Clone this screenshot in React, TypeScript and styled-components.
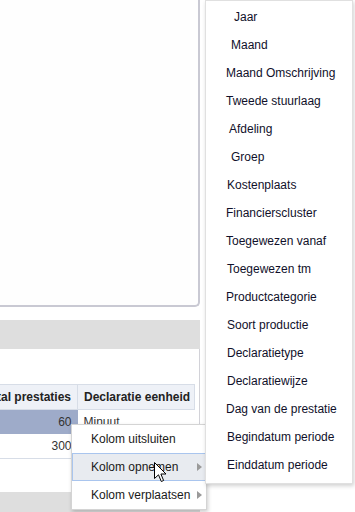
import React from 'react'
import styled, { createGlobalStyle } from 'styled-components'

const GlobalStyle = createGlobalStyle`
    html, body {
        margin: 0;
        padding: 0;
        background: #ffffff;
    }
    body {
        font-family: Arial, "Liberation Sans", sans-serif;
        font-size: 12px;
    }
`

const Page = styled.div`
    position: relative;
    width: 355px;
    height: 512px;
    overflow: hidden;
    background: #ffffff;
`

const LeftColumn = styled.div`
    width: 200px;
    display: flex;
    flex-direction: column;
`

const Card = styled.div`
    height: 305px;
    background: #fefefe;
    border-right: 2px solid #c9c9d3;
    border-bottom: 2px solid #c9c9d3;
    border-bottom-right-radius: 5px;
`

const SectionBar = styled.div<{ $top: number }>`
    margin-top: ${p => p.$top}px;
    height: 29px;
    background: #dedede;
    flex-shrink: 0;
`

const Panel = styled.div`
    height: 108px;
    padding: 35px 5px 0 0;
    border-right: 1px solid #d2d2d8;
    overflow: hidden;
`

const Table = styled.table`
    width: 227px;
    border-collapse: collapse;
    margin-left: -33px;
    table-layout: fixed;
    color: #333;
    font-size: 12px;
`

const HeadCell = styled.th<{ $width: number; $align: string }>`
    width: ${p => p.$width}px;
    height: 25px;
    padding: 0 6px;
    box-sizing: border-box;
    background: #eef1f7;
    border: 1px solid #d7dde7;
    text-align: ${p => p.$align};
    font-weight: bold;
    color: #222;
    white-space: nowrap;
`

const Cell = styled.td<{ $selected?: boolean; $align: string }>`
    height: 24px;
    padding: 0 6px;
    background: ${p => (p.$selected ? '#9eabc9' : '#ffffff')};
    text-align: ${p => p.$align};
    white-space: nowrap;
`

const LastRow = styled.tr`
    border-bottom: 1px solid #d7dde7;
`

const ContextMenu = styled.div`
    position: absolute;
    left: 71px;
    top: 424px;
    width: 134px;
    background: #ffffff;
    border: 1px solid #d4d4d4;
    box-shadow: 1px 2px 4px rgba(0, 0, 0, 0.2);
    z-index: 1;
`

const MenuItem = styled.div<{ $hover?: boolean }>`
    position: relative;
    height: 28px;
    display: flex;
    align-items: center;
    padding-left: 18px;
    box-sizing: border-box;
    color: #1a1a1a;
    font-size: 12px;
    white-space: nowrap;
    background: ${p => (p.$hover ? '#e8ebf0' : 'transparent')};
    border: 1px solid ${p => (p.$hover ? '#a9c5ee' : 'transparent')};
`

const Arrow = styled.span`
    position: absolute;
    right: 3px;
    top: 50%;
    margin-top: -4px;
    width: 0;
    height: 0;
    border-top: 4px solid transparent;
    border-bottom: 4px solid transparent;
    border-left: 5px solid #9a9a9a;
`

const Cursor = styled.svg`
    position: absolute;
    left: 154px;
    top: 462px;
    z-index: 3;
`

const SubMenu = styled.div`
    position: absolute;
    left: 205px;
    top: 0;
    width: 146px;
    padding: 2px 0 4px;
    background: #ffffff;
    border: 1px solid #e0e0e0;
    box-shadow: 1px 2px 4px rgba(0, 0, 0, 0.18);
    z-index: 2;
`

const SubItem = styled.div<{ $indent: number }>`
    height: 28px;
    display: flex;
    align-items: center;
    padding-left: ${p => 20 + p.$indent}px;
    color: #10102a;
    font-size: 12px;
    white-space: nowrap;
`

const columns: [string, number][] = [
    ['Jaar', 8],
    ['Maand', 5],
    ['Maand Omschrijving', 0],
    ['Tweede stuurlaag', 0],
    ['Afdeling', 3],
    ['Groep', 5],
    ['Kostenplaats', 1],
    ['Financierscluster', 0],
    ['Toegewezen vanaf', 0],
    ['Toegewezen tm', 1],
    ['Productcategorie', 0],
    ['Soort productie', 1],
    ['Declaratietype', 1],
    ['Declaratiewijze', 1],
    ['Dag van de prestatie', 0],
    ['Begindatum periode', 1],
    ['Einddatum periode', 1],
]

const App: React.FC = () => {
    return (
        <Page>
            <GlobalStyle />
            <LeftColumn>
                <Card />
                <SectionBar $top={13} />
                <Panel>
                    <Table>
                        <thead>
                            <tr>
                                <HeadCell $width={110} $align="right">Aantal prestaties</HeadCell>
                                <HeadCell $width={117} $align="left">Declaratie eenheid</HeadCell>
                            </tr>
                        </thead>
                        <tbody>
                            <tr>
                                <Cell $selected $align="right">60</Cell>
                                <Cell $align="left">Minuut</Cell>
                            </tr>
                            <LastRow>
                                <Cell $align="right">300</Cell>
                                <Cell $align="left" />
                            </LastRow>
                        </tbody>
                    </Table>
                </Panel>
                <SectionBar $top={0} />
            </LeftColumn>

            <ContextMenu>
                <MenuItem>Kolom uitsluiten</MenuItem>
                <MenuItem $hover>Kolom opnemen<Arrow /></MenuItem>
                <MenuItem>Kolom verplaatsen<Arrow /></MenuItem>
            </ContextMenu>

            <Cursor width="13" height="21" viewBox="0 0 13 21">
                <path
                    d="M0.5 0.5 L0.5 16.5 L4.5 12.8 L7.3 19.5 L9.6 18.5 L6.9 12 L12 12 Z"
                    fill="#ffffff"
                    stroke="#000000"
                    strokeWidth="1"
                    strokeLinejoin="round"
                />
            </Cursor>

            <SubMenu>
                {columns.map(([label, indent]) => (
                    <SubItem key={label} $indent={indent}>{label}</SubItem>
                ))}
            </SubMenu>
        </Page>
    )
}

export default App
